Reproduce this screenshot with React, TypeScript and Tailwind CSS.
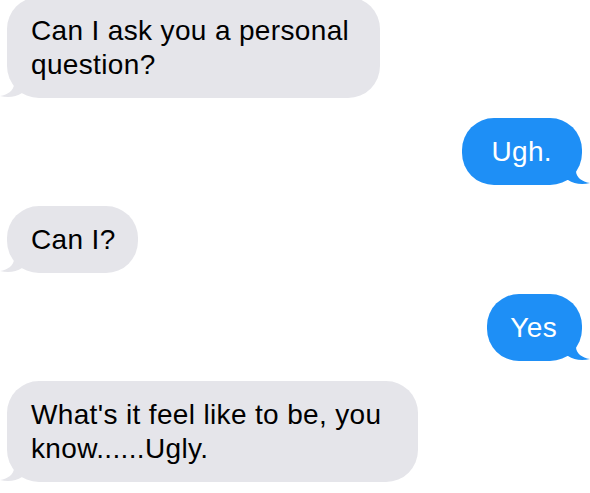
import React from "react";

const font = { fontFamily: '"Liberation Sans", Arial, sans-serif' };

function Left({ children, className = "", pad = "pl-[24px] pr-[27px]" }: { children: React.ReactNode; className?: string; pad?: string }) {
  return (
    <div className={"relative self-start ml-[7px] " + className}>
      <svg className="absolute left-[-7px] bottom-0" width="34" height="34" viewBox="0 0 34 34">
        <path d="M14 0 L14 20 C14 26 8 31 0 32 C8 34 16 33 22 29 L34 29 L34 0 Z" fill="#e5e5ea" />
      </svg>
      <div className={"relative bg-[#e5e5ea] text-black rounded-[32px] pt-[17px] pb-[16px] text-[28px] leading-[34px] tracking-[0.35px] " + pad}>
        {children}
      </div>
    </div>
  );
}

function Right({ children, className = "", pad = "pl-[26px] pr-[28px]" }: { children: React.ReactNode; className?: string; pad?: string }) {
  return (
    <div className={"relative self-end mr-[8px] " + className}>
      <svg className="absolute right-[-8px] bottom-0" width="34" height="34" viewBox="0 0 34 34">
        <path d="M20 0 L20 20 C20 26 26 31 34 32 C26 34 18 33 12 29 L0 29 L0 0 Z" fill="#1e8ff6" />
      </svg>
      <div className={"relative bg-[#1e8ff6] text-white rounded-[32px] pt-[17px] pb-[16px] text-[28px] leading-[34px] tracking-[0.35px] " + pad}>
        {children}
      </div>
    </div>
  );
}

export default function App() {
  return (
    <div className="w-[590px] h-[493px] bg-white overflow-hidden flex flex-col" style={font}>
      <Left className="mt-[-3px] w-[373px]">Can I ask you a personal question?</Left>
      <Right className="mt-[20px]" pad="pl-[29px] pr-[30px]">Ugh.</Right>
      <Left className="mt-[21px]" pad="pl-[24px] pr-[22px]">Can I?</Left>
      <Right className="mt-[21px]" pad="pl-[23px] pr-[25px]">Yes</Right>
      <Left className="mt-[20px] w-[411px]">What's it feel like to be, you know......Ugly.</Left>
    </div>
  );
}
